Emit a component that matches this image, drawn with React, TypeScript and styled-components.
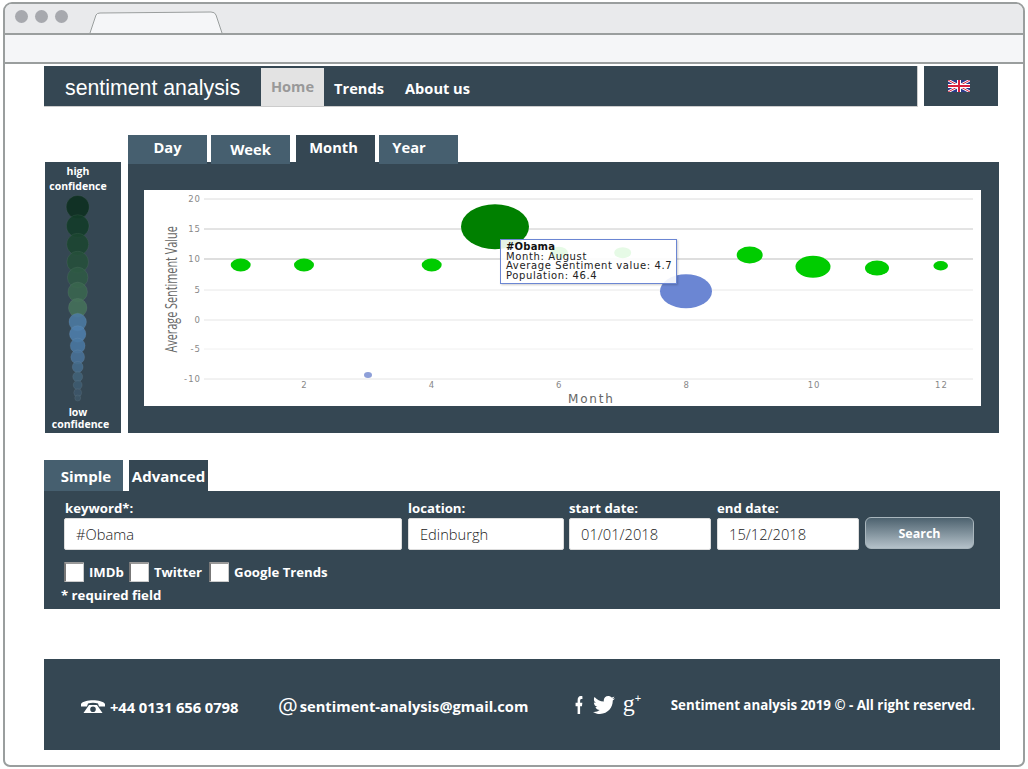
import React from "react";
import styled, { createGlobalStyle } from "styled-components";
import { FaFacebookF, FaTwitter } from "react-icons/fa";

const Global = createGlobalStyle`
  html, body { margin: 0; padding: 0; background: #fff; }
  body { font-family: "Open Sans", "Liberation Sans", sans-serif; overflow: hidden; }
  * { box-sizing: border-box; }
`;

const DARK = "#354753";
const TAB = "#465f6f";

const Window = styled.div`
  width: 1022px; height: 765px; margin: 2px 0 0 3px;
  border: 2px solid #9a9e9e; border-radius: 9px 9px 7px 7px; background: #fff;
  overflow: hidden;
`;
const TitleBar = styled.div`
  height: 29px; background: #e9eaec; display: flex; align-items: flex-start;
  padding: 6px 0 0 10px;
`;
const Dot = styled.span`
  width: 13px; height: 13px; border-radius: 50%; background: #a7a9ae; margin-right: 7px; flex: none;
`;
const BrowserTab = styled.svg`
  width: 134px; height: 23px; margin: 0 0 0 14px; flex: none;
`;
const UrlBar = styled.div`
  height: 31px; background: #f5f6f8;
  border-top: 2px solid #9a9e9e; border-bottom: 2px solid #9a9e9e;
`;
const Content = styled.div`
  padding: 2px 0 0 39px;
`;
const TopRow = styled.div`
  display: flex; gap: 6px; height: 40px; align-items: flex-start;
`;
const Nav = styled.nav`
  width: 874px; height: 41px; background: ${DARK}; display: flex;
  border-right: 1px solid #ccc; border-bottom: 1px solid #ccc; color: #fff;
`;
const Brand = styled.div`
  width: 217px; padding-left: 21px; font: 21.3px/45px "Liberation Sans", Arial, sans-serif; color: #fff;
`;
const NavItem = styled.a<{ $active?: boolean; $w: number; $inset?: number }>`
  width: ${p => p.$w}px; margin-top: 2px; text-align: center; font-size: 14.6px; font-weight: 700;
  padding-right: ${p => p.$inset ?? 0}px;
  line-height: ${p => (p.$active ? 37 : 40)}px;
  background: ${p => (p.$active ? "#e3e3e3" : "transparent")};
  color: ${p => (p.$active ? "#999" : "#fff")};
`;
const FlagBox = styled.div`
  width: 74px; height: 40px; background: ${DARK}; padding: 14px 0 0 24px;
`;
const ChartSection = styled.section`
  display: flex; gap: 7px; margin-top: 29px; align-items: flex-start;
`;
const Legend = styled.aside`
  width: 76px; height: 271px; margin: 27px 0 0 1px; background: ${DARK}; color: #fff;
  display: flex; flex-direction: column; align-items: center; text-align: center;
  font-size: 10.5px; font-weight: 700; padding-top: 2px;
`;
const LegendTop = styled.div`
  line-height: 15px; padding-right: 10px;
`;
const LegendBottom = styled.div`
  line-height: 12px; margin-top: 2px; padding-right: 5px;
`;
const LegendLow = styled.span`
  display: block; padding-right: 5px;
`;
const LegendDots = styled.svg`
  width: 76px; height: 210px; flex: none; display: block;
`;
const ChartColumn = styled.div`
  width: 871px;
`;
const TabRow = styled.div`
  display: flex; height: 27px; position: relative; z-index: 1;
`;
const Tab = styled.div<{ $active?: boolean; $gap?: number; $dy?: number; $inset?: number }>`
  width: 79px; height: ${p => (p.$active ? 27 : 29)}px;
  margin-right: ${p => p.$gap ?? 4}px;
  padding-right: ${p => p.$inset ?? 0}px;
  background: ${p => (p.$active ? DARK : TAB)};
  color: #fff; font-size: 14.7px; font-weight: 700; text-align: center;
  line-height: ${p => 25 + (p.$dy ?? 0)}px;
`;
const ChartPanel = styled.div`
  height: 271px; background: ${DARK}; padding: 28px 18px 27px 16px;
`;
const Chart = styled.div`
  position: relative; width: 837px; height: 216px; background: #fff;
`;
const ChartSvg = styled.svg`
  display: block; width: 837px; height: 216px;
  font-family: "DejaVu Sans", sans-serif;
`;
const Tooltip = styled.div`
  position: absolute; left: 356px; top: 49px; width: 177px; height: 45px;
  border: 1px solid #6b86d3; background: rgba(255,255,255,.9);
  box-shadow: 1px 1px 2px rgba(0,0,0,.2);
  padding: 2px 0 0 5px; font: 10px/9.6px "DejaVu Sans", sans-serif; letter-spacing: .62px; color: #222;
  white-space: nowrap;
`;
const TipTitle = styled.div`
  font-weight: 700; color: #111; letter-spacing: .2px;
`;
const SearchTabs = styled.div`
  display: flex; height: 31px; margin-top: 27px;
`;
const SearchTab = styled.div<{ $active?: boolean; $gap?: number; $shift?: number }>`
  width: 79px; height: 31px; margin-right: ${p => p.$gap ?? 0}px;
  padding-left: ${p => p.$shift ?? 0}px;
  background: ${p => (p.$active ? DARK : TAB)}; color: #fff;
  font-size: 15px; font-weight: 700; line-height: 33px; text-align: center;
`;
const SearchPanel = styled.form`
  width: 956px; height: 118px; background: ${DARK}; color: #fff; padding: 8px 0 0 20px;
`;
const Fields = styled.div`
  display: flex; align-items: flex-start;
`;
const Field = styled.label<{ $w: number; $gap: number }>`
  display: block; width: ${p => p.$w}px; margin-right: ${p => p.$gap}px;
  font-size: 13.2px; font-weight: 700; line-height: 18px;
`;
const FieldLabel = styled.span<{ $x?: number }>`
  display: block; height: 19px; padding-left: ${p => p.$x ?? 0}px; white-space: nowrap;
`;
const Input = styled.input`
  display: block; width: 100%; height: 32px; border: 1px solid #ddd; border-radius: 2px; background: #fff;
  padding: 0 0 0 11px; font: 300 14.7px "Open Sans", sans-serif; color: #222; outline: none;
`;
const SearchButton = styled.button`
  width: 109px; height: 32px; margin-top: 18px; border: 1px solid #a9b6bd; border-radius: 6px;
  background: linear-gradient(#4d626f, #b4c1c9); color: #fff;
  font: 700 12.5px "Open Sans", sans-serif; padding: 0;
`;
const Checks = styled.div`
  display: flex; align-items: center; height: 20px; margin-top: 12px;
  font-size: 13.2px; font-weight: 700; line-height: 22px;
`;
const Check = styled.input`
  appearance: none; width: 20px; height: 20px; margin: 0 5px 0 0; background: #fff; flex: none;
  border: 1px solid #ccc; border-left: 2px solid #777; border-top: 2px solid #999; border-radius: 1px;
`;
const CheckText = styled.span<{ $gap: number }>`
  margin-right: ${p => p.$gap}px; white-space: nowrap;
`;
const Required = styled.div`
  margin: 4px 0 0 -3px; font-size: 13.2px; line-height: 18px; font-weight: 700;
`;
const Footer = styled.footer`
  width: 956px; height: 91px; margin-top: 50px; background: ${DARK}; color: #fff;
  display: flex; align-items: center; padding: 4px 0 0 37px; white-space: nowrap;
`;
const Phone = styled.svg`
  width: 24px; height: 14px; margin-right: 5px; flex: none; fill: #fff; position: relative; top: -1px;
`;
const PhoneNum = styled.span`
  width: 168px; flex: none; font-size: 14.8px; font-weight: 700; letter-spacing: -.1px;
`;
const At = styled.span`
  font-size: 22px; font-weight: 400; line-height: 24px; margin-right: 2px; position: relative; top: -2px;
`;
const Email = styled.span`
  width: 275px; flex: none; font-size: 14.7px; font-weight: 700; position: relative; top: -1px;
`;
const Social = styled.div`
  display: flex; align-items: center; width: 96px; flex: none; position: relative; top: -2px;
`;
const Fb = styled(FaFacebookF)`
  flex: none; width: 8px; height: 18px;
`;
const Bird = styled(FaTwitter)`
  margin-left: 10px; flex: none;
`;
const GPlus = styled.span`
  font: 24px/20px "Liberation Serif", serif; margin-left: 8px; position: relative; top: -2px;
`;
const GPlusMark = styled.span`
  font: 11px "Liberation Sans", sans-serif; position: relative; top: -9px;
`;
const Copy = styled.span`
  font-size: 13.3px; font-weight: 700; position: relative; top: -2px;
`;

const legendDots: [number, number, string][] = [
  [207, 11.5, "#0c2f1f"], [226, 11.3, "#123b28"], [244.3, 11, "#1b4630"], [262, 10.8, "#25503a"],
  [277.5, 10.3, "#2f5a44"], [292, 9.8, "#3a674f"], [307.7, 9.3, "#46725a"], [322, 8.8, "#4c7ba3"],
  [334, 8.3, "#4f80ad"], [345.7, 7.5, "#4a79a3"], [357, 7, "#4a7398"], [367, 5.5, "#456c8b"],
  [376.7, 5, "#426379"], [385, 4.5, "#3f5c71"], [392.7, 4, "#3d576a"], [398, 3, "#3e5668"],
];

const grid: [number, string, string, number][] = [
  [199, "20", "#dcdcdc", 1], [229, "15", "#c8c8c8", 1], [259, "10", "#bdbdbd", 1], [290, "5", "#e8e8e8", 1],
  [320, "0", "#f2f2f2", 2], [349, "-5", "#f0f0f0", 1], [379, "-10", "#e4e4e4", 1],
];

const bubbles: [number, number, number, number, string][] = [
  [240.7, 265, 10, 6.5, "#00cc00"], [304, 265, 10, 6.5, "#00cc00"], [368, 375, 4, 3, "#8d9fd8"],
  [431.7, 265, 10, 6.5, "#00cc00"], [495, 226.7, 34, 22.5, "#008000"], [559, 252.7, 9, 6, "#00cc00"],
  [622.7, 252.7, 8.5, 5.5, "#00cc00"], [686, 291.3, 26, 17, "#6b86d3"], [749.7, 255, 13, 8.5, "#00cc00"],
  [813, 266.7, 17.5, 11, "#00cc00"], [877, 268, 12, 7.5, "#00cc00"], [940.7, 265.7, 7.3, 4.7, "#00cc00"],
];

const OX = 144, OY = 190;

export default function App() {
  return (
    <>
      <Global />
      <Window>
        <TitleBar>
          <Dot /><Dot /><Dot />
          <BrowserTab viewBox="0 0 134 23">
            <path d="M1 23 L7 5 Q8 3 11 3 L122 2 Q126 2 127 5 L133 23" fill="#f5f6f8" stroke="#9a9e9e" strokeWidth="1" />
          </BrowserTab>
        </TitleBar>
        <UrlBar />
        <Content>
          <TopRow>
            <Nav>
              <Brand>sentiment analysis</Brand>
              <NavItem $active $w={63}>Home</NavItem>
              <NavItem $w={72} $inset={2}>Trends</NavItem>
              <NavItem $w={87} $inset={4}>About us</NavItem>
            </Nav>
            <FlagBox>
              <svg width="22" height="12" viewBox="0 0 22 12" style={{ display: "block" }}>
                <rect width="22" height="12" fill="#2b3a8c" />
                <path d="M0 0L22 12M22 0L0 12" stroke="#fff" strokeWidth="2.6" />
                <path d="M0 0L22 12M22 0L0 12" stroke="#d8213f" strokeWidth="1" />
                <path d="M11 0V12M0 6H22" stroke="#fff" strokeWidth="4" />
                <path d="M11 0V12M0 6H22" stroke="#d8213f" strokeWidth="2" />
              </svg>
            </FlagBox>
          </TopRow>

          <ChartSection>
            <Legend>
              <LegendTop>high<br />confidence</LegendTop>
              <LegendDots viewBox="0 0 76 210">
                {legendDots.map(([y, r, c], i) => (
                  <circle key={i} cx={32.7} cy={y - 194} r={r} fill={c} fillOpacity=".88" stroke="rgba(255,255,255,.12)" strokeWidth=".5" />
                ))}
              </LegendDots>
              <LegendBottom><LegendLow>low</LegendLow>confidence</LegendBottom>
            </Legend>
            <ChartColumn>
              <TabRow>
                <Tab>Day</Tab>
                <Tab $gap={6} $dy={3}>Week</Tab>
                <Tab $active $inset={4} $dy={-1}>Month</Tab>
                <Tab $inset={19}>Year</Tab>
              </TabRow>
              <ChartPanel>
                <Chart>
                  <ChartSvg viewBox="0 0 837 216">
                    {grid.map(([y, label, c, w]) => (
                      <g key={label}>
                        <line x1={60} x2={829} y1={y - OY} y2={y - OY} stroke={c} strokeWidth={w} />
                        <text x={57} y={y - OY + 3} textAnchor="end" fontSize="8.500" letterSpacing="1" fill="#888">{label}</text>
                      </g>
                    ))}
                    {[2, 4, 6, 8, 10, 12].map((m, i) => (
                      <text key={m} x={160.500 + i * 127.400} y={198} textAnchor="middle" fontSize="8.500" letterSpacing="1" fill="#888">{m}</text>
                    ))}
                    <text x={424} y={212.500} fontSize="12" letterSpacing="1.800" fill="#666">Month</text>
                    <text transform="translate(33,162.500) rotate(-90) scale(.7,1)" fontFamily="Open Sans, sans-serif" fontSize="15.500" fill="#666">Average Sentiment Value</text>
                    {bubbles.map(([x, y, rx, ry, c], i) => (
                      <ellipse key={i} cx={x - OX} cy={y - OY} rx={rx} ry={ry} fill={c} />
                    ))}
                  </ChartSvg>
                  <Tooltip>
                    <TipTitle>#Obama</TipTitle>
                    <div>Month: August</div>
                    <div>Average Sentiment value: 4.7</div>
                    <div>Population: 46.4</div>
                  </Tooltip>
                </Chart>
              </ChartPanel>
            </ChartColumn>
          </ChartSection>

          <SearchTabs>
            <SearchTab $gap={6} $shift={5}>Simple</SearchTab>
            <SearchTab $active>Advanced</SearchTab>
          </SearchTabs>
          <SearchPanel>
            <Fields>
              <Field $w={338} $gap={6}>
                <FieldLabel $x={1}>keyword*:</FieldLabel>
                <Input defaultValue="#Obama" />
              </Field>
              <Field $w={156} $gap={5}>
                <FieldLabel>location:</FieldLabel>
                <Input defaultValue="Edinburgh" />
              </Field>
              <Field $w={142} $gap={6}>
                <FieldLabel>start date:</FieldLabel>
                <Input defaultValue="01/01/2018" />
              </Field>
              <Field $w={142} $gap={6}>
                <FieldLabel>end date:</FieldLabel>
                <Input defaultValue="15/12/2018" />
              </Field>
              <SearchButton type="button">Search</SearchButton>
            </Fields>
            <Checks>
              <Check type="checkbox" /><CheckText $gap={5}>IMDb</CheckText>
              <Check type="checkbox" /><CheckText $gap={7}>Twitter</CheckText>
              <Check type="checkbox" /><CheckText $gap={0}>Google Trends</CheckText>
            </Checks>
            <Required>* required field</Required>
          </SearchPanel>

          <Footer>
            <Phone viewBox="0 0 24 14">
              <path d="M0 5C3 0 21 0 24 5V7.500H18L17 4.500C14 3.500 10 3.500 7 4.500L6 7.500H0Z" />
              <path fillRule="evenodd" d="M8 6H16L21.500 14H2.500ZM12 7.500A2.800 2.800 0 1 0 12 13.100A2.800 2.800 0 1 0 12 7.500Z" />
            </Phone>
            <PhoneNum>+44 0131 656 0798</PhoneNum>
            <At>@</At>
            <Email>sentiment-analysis@gmail.com</Email>
            <Social>
              <Fb preserveAspectRatio="none" />
              <Bird size={22} />
              <GPlus>g<GPlusMark>+</GPlusMark></GPlus>
            </Social>
            <Copy>Sentiment analysis 2019 © - All right reserved.</Copy>
          </Footer>
        </Content>
      </Window>
    </>
  );
}
